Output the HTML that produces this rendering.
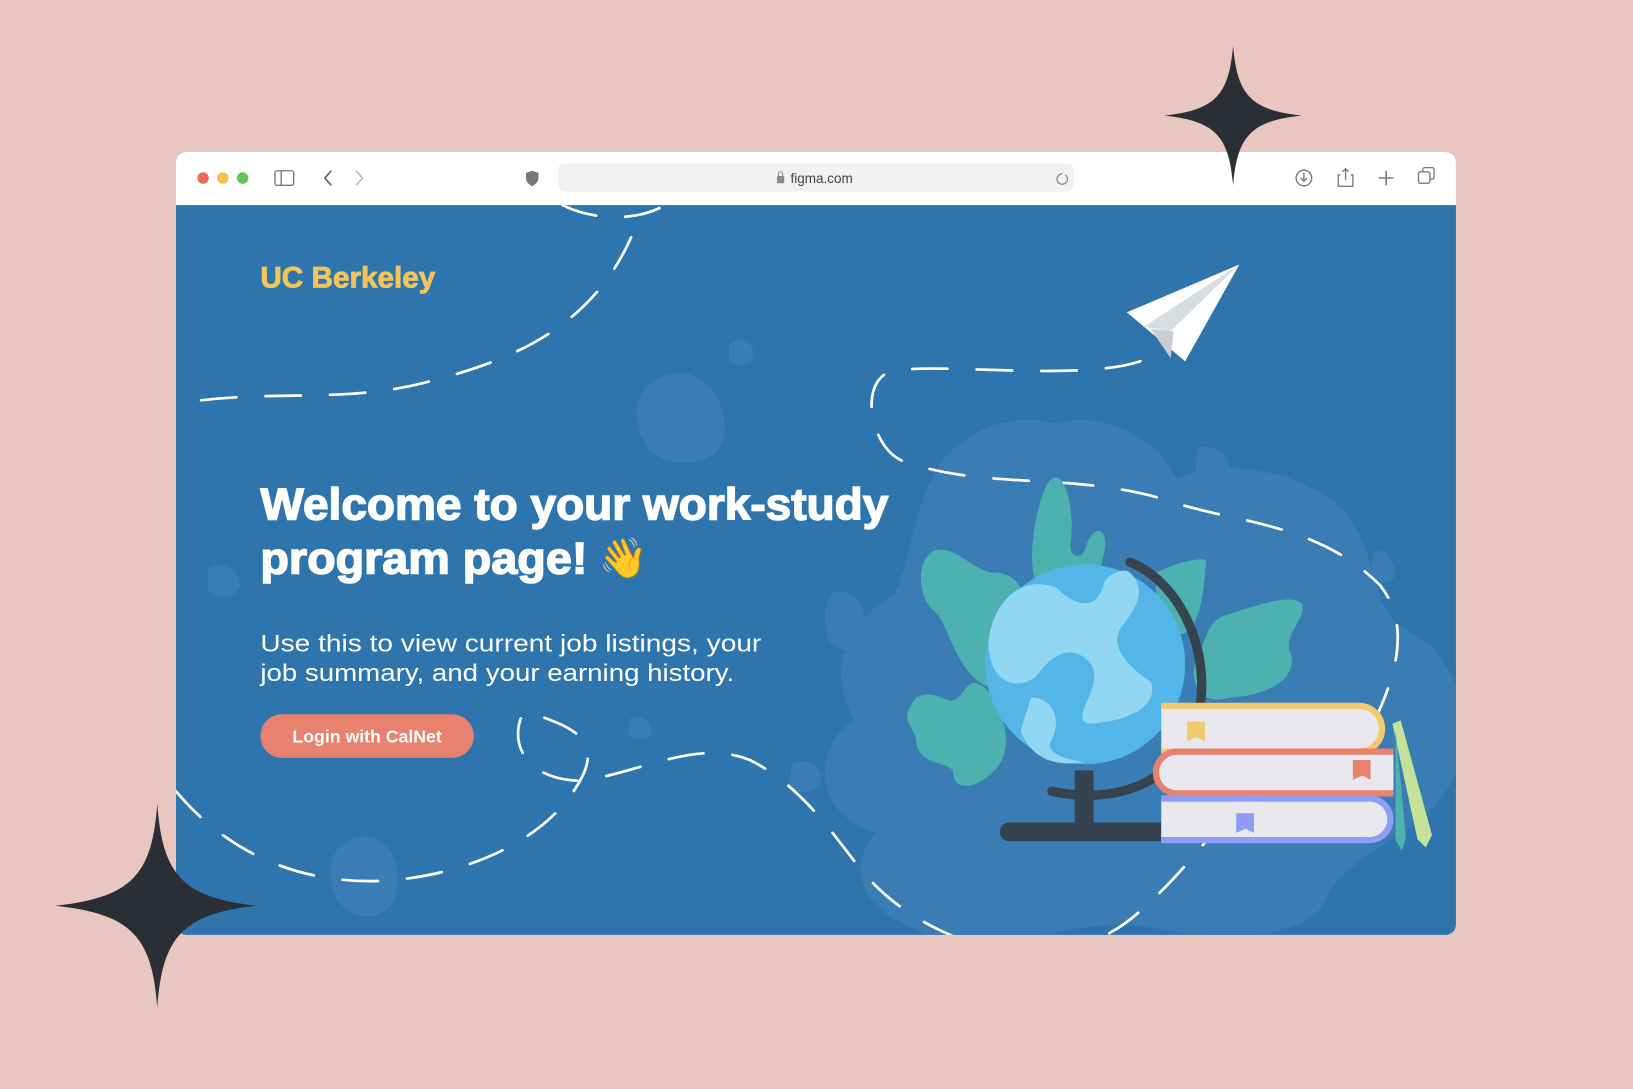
<!DOCTYPE html>
<html><head><meta charset="utf-8"><style>html,body{margin:0;padding:0;background:#e9c6c0;overflow:hidden}svg{display:block}</style></head><body>
<svg width="1633" height="1089" viewBox="0 0 1568 1046" preserveAspectRatio="none" xmlns="http://www.w3.org/2000/svg" font-family="Liberation Sans, sans-serif">
<rect width="1568" height="1046" fill="#e9c6c0"/>
<defs><clipPath id="c"><rect x="169" y="197" width="1229" height="701" rx="0"/></clipPath></defs>
<rect x="169" y="146" width="1229" height="752" rx="10" fill="#2e75ae"/>
<path d="M179 146H1388a10 10 0 0 1 10 10V197H169V156a10 10 0 0 1 10-10z" fill="#fff"/>
<circle cx="195" cy="171" r="5.5" fill="#ec6a5e"/><circle cx="214" cy="171" r="5.5" fill="#f4bf4f"/><circle cx="233" cy="171" r="5.5" fill="#61c554"/>
<rect x="264" y="164" width="18" height="14" rx="2" fill="none" stroke="#777" stroke-width="1.3"/><line x1="270" y1="164" x2="270" y2="178" stroke="#777" stroke-width="1.3"/>
<path d="M318 164l-6 7 6 7" fill="none" stroke="#666" stroke-width="1.6"/><path d="M342 164l6 7-6 7" fill="none" stroke="#bbb" stroke-width="1.6"/>
<path d="M511 164l6 2v5c0 4-3 6-6 8-3-2-6-4-6-8v-5z" fill="#777"/>
<rect x="536" y="157" width="495" height="27" rx="6" fill="#f1f1f1"/>
<rect x="746" y="169" width="7" height="7" rx="1" fill="#888"/><path d="M747.5 169v-2a2 2 0 0 1 4 0v2" fill="none" stroke="#888"/>
<text x="759" y="176" font-size="13" fill="#444">figma.com</text>
<path d="M1023 168a5 5 0 1 1-3-1" fill="none" stroke="#888" stroke-width="1.2"/>
<circle cx="1252" cy="171" r="7.5" fill="none" stroke="#777" stroke-width="1.3"/><path d="M1252 166v8M1249 171l3 3 3-3" fill="none" stroke="#777" stroke-width="1.3"/>
<path d="M1287 168h-2v11h14v-11h-2M1292 173v-11M1289 165l3-3 3 3" fill="none" stroke="#777" stroke-width="1.3"/>
<path d="M1331 164v14M1324 171h14" stroke="#777" stroke-width="1.5"/>
<rect x="1362" y="165" width="11" height="11" rx="2" fill="none" stroke="#777" stroke-width="1.3"/><path d="M1366 165v-2a2 2 0 0 1 2-2h7a2 2 0 0 1 2 2v7a2 2 0 0 1-2 2h-2" fill="none" stroke="#777" stroke-width="1.3"/>
<g clip-path="url(#c)">
<g fill="#3a7db4">
<path d="M1000 410c60-20 110 10 130 50 40-20 120-10 160 30 40 50 20 100 70 120 50 30 60 120 20 160-30 40-90 50-110 100-30 40-120 30-170 20-80-10-120 30-200 10-70-20-90-60-60-100-60-20-60-80-20-110-30-50 0-100 40-120 20-50 20-120 70-150 30-20 70-20 90-10z"/>
<path d="M640 360c40-10 60 30 55 60-5 25-40 30-60 20-30-15-35-70 5-80z"/>
<path d="M700 330c10-8 25 0 24 12-2 10-20 12-24 4z"/>
<path d="M330 810c30-20 60 10 50 50-5 20-30 25-45 15-20-12-25-50-5-65z"/>
<path d="M200 545c15-8 32 5 30 18-2 12-25 14-30 4z"/>
<path d="M605 690c10-5 25 5 20 15-5 8-20 6-22-2z"/>
<path d="M760 735c12-10 30 0 28 16-3 12-25 14-30 2z"/>
<path d="M800 570c20-10 40 20 25 45-10 15-30 10-32-10-2-15 0-30 7-35z"/>
<path d="M920 460c15-5 30 10 25 25-5 10-25 10-28-5z"/>
<path d="M1150 430c15-5 35 10 30 25-5 10-30 10-32-5z"/>
<path d="M1320 530c10-5 22 10 18 25-5 8-20 5-22-8z"/>
</g>
<g fill="none" stroke="#fff" stroke-width="2.6" stroke-dasharray="34 28" stroke-linecap="round">
<path d="M540 197c30 15 70 15 95 2M606 228c-40 90-120 120-200 140-80 20-150 5-237 20"/>
<path d="M1095 347c-60 20-200 0-240 10-30 10-20 70 10 85 80 30 170 10 260 40 60 20 140 20 200 80 40 50 0 120-20 160"/>
<path d="M169 760c50 60 120 90 200 86 80-5 160-40 190-100 20-40-20-50-45-60 M500 690c-10 30 10 60 60 60 60-10 110-40 160-20 60 30 90 90 120 120 60 60 180 100 260 20 40-35 70-80 100-110"/>
</g>
<path d="M1082 300l108-46-52 93z" fill="#fff"/><path d="M1098 314l92-60-66 64z" fill="#d8dde2"/><path d="M1105 316l19 28 3-26z" fill="#c8ced4"/>
<g fill="#4cb1af">
<path d="M1010 460c15-10 22 40 18 60-3 15 10 20 15 5 5-20 20-20 18 0-5 40-30 60-40 60-15 0-30-20-30-50 0-30 10-70 19-75z"/>
<path d="M895 530c20-10 40 20 60 20 30 0 40 40 20 60-20 20-5 40-25 50-30-10-40-60-50-70-20-15-20-50-5-60z"/>
<path d="M1180 590c30-10 60-20 70-10 5 15-20 30-10 50 5 30-40 40-60 40-30 10-40-20-30-40 10-20 10-35 30-40z"/>
<path d="M1110 550c20-10 45-15 48-12-2 30-5 60-20 70-20 10-30-20-28-58z"/>
<path d="M880 670c20-10 30 10 40 0 10-10 10-20 25-10 20 20 30 60 10 80-20 20-40 20-40 0-10-10-30-5-35-25 0-20-20-20 0-45z"/>
</g>
<path d="M1085 540c50 20 80 90 65 150-15 55-70 85-140 70" fill="none" stroke="#364350" stroke-width="9" stroke-linecap="round"/>
<circle cx="1042" cy="638" r="96" fill="#54b5e8"/>
<path d="M1015 565c20 20 40 20 45-5 5-10 20-15 25-10 20 20 0 40-10 55-10 20 15 40 30 50 10 30-40 40-60 40-20-5 20-40 0-60-20-20-40 0-50 15-30 20-50-10-45-40 5-30 30-60 65-45zM990 670c20 0 30 20 20 40-10 15 20 20 30 22-30 5-50-5-60-30z" fill="#91d7f4"/>
<rect x="1032" y="740" width="18" height="55" fill="#364350"/>
<rect x="960" y="790" width="165" height="18" rx="9" fill="#364350"/>
<g>
<path d="M1115 678h190a22 22 0 0 1 0 44h-190" fill="#e8e8ee" stroke="#f2c96f" stroke-width="6"/>
<path d="M1338 722h-208a20 20 0 0 0 0 40h208" fill="#e8e8ee" stroke="#e8816e" stroke-width="6"/>
<path d="M1115 767h200a20 20 0 0 1 0 40h-200" fill="#e8e8ee" stroke="#8f9cf7" stroke-width="6"/>
<path d="M1140 693h17v19l-8-4-9 4z" fill="#f2c96f"/>
<path d="M1299 730h17v19l-8-4-9 4z" fill="#e8816e"/>
<path d="M1187 781h17v19l-8-4-9 4z" fill="#8f9cf7"/>
<path d="M1337 695l8-3 30 110-6 12-8-8z" fill="#c5e29a"/><path d="M1340 700l10 105-4 12-6-10z" fill="#4cb1af"/>
</g>
</g>
<text x="250" y="276" font-size="28" font-weight="bold" fill="#f2c45a" stroke="#f2c45a" stroke-width="0.8" textLength="168" lengthAdjust="spacingAndGlyphs">UC Berkeley</text>
<g fill="#fff" stroke="#fff" stroke-width="1.4" font-weight="bold">
<text x="250" y="499" font-size="43" textLength="603" lengthAdjust="spacingAndGlyphs">Welcome to your work-study</text>
<text x="250" y="551" font-size="43" textLength="314" lengthAdjust="spacingAndGlyphs">program page!</text>
</g>
<text x="575" y="549" font-size="38" fill="#f4c03c">👋</text>
<text x="250" y="626" font-size="23" fill="#fff" textLength="481" lengthAdjust="spacingAndGlyphs">Use this to view current job listings, your</text>
<text x="250" y="654" font-size="23" fill="#fff" textLength="455" lengthAdjust="spacingAndGlyphs">job summary, and your earning history.</text>
<rect x="250" y="686" width="205" height="42" rx="21" fill="#e8816e"/>
<text x="352.5" y="713" font-size="17" font-weight="bold" fill="#fff" text-anchor="middle">Login with CalNet</text>
<path d="M1184 44C1188 90 1200 106 1250 111C1200 116 1188 132 1184 178C1180 132 1168 116 1118 111C1168 106 1180 90 1184 44z" fill="#2a2f36"/>
<path d="M151 772C156 840 175 862 246 870C175 878 156 900 151 968C146 900 127 878 53 870C127 862 146 840 151 772z" fill="#2a2f36"/>
</svg>
</body></html>
